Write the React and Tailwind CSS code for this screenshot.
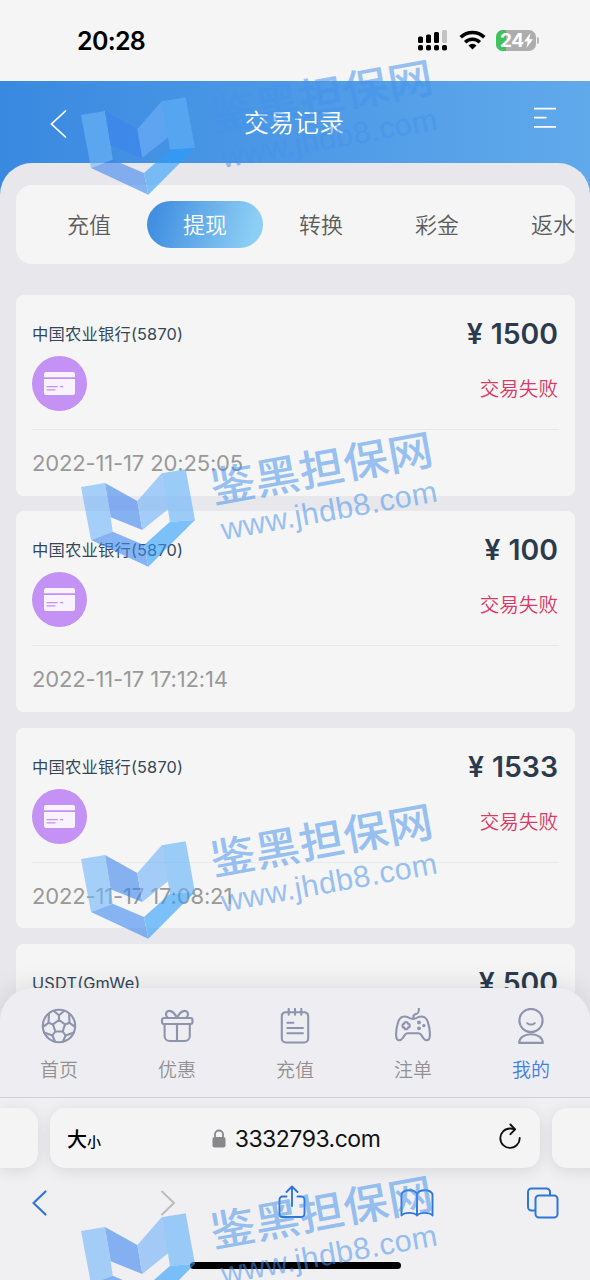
import React, { useState } from 'react';

const tabs = ['充值', '提现', '转换', '彩金', '返水'];

const records = [
  { id: 1, name: '中国农业银行(5870)', amount: '1500', status: '交易失败', time: '2022-11-17 20:25:05' },
  { id: 2, name: '中国农业银行(5870)', amount: '100', status: '交易失败', time: '2022-11-17 17:12:14' },
  { id: 3, name: '中国农业银行(5870)', amount: '1533', status: '交易失败', time: '2022-11-17 17:08:21' },
  { id: 4, name: 'USDT(GmWe)', amount: '500' },
];

function StatusBar() {
  return (
    <div className="flex h-[81px] shrink-0 items-start justify-between bg-[#f5f5f5] pl-[77px] pr-[51px] pt-[26px]">
      <span className="text-[25px] font-semibold leading-[30px] tracking-[-0.7px] text-black">20:28</span>
      <div className="flex h-[28px] items-center">
        <svg width="32" height="22" viewBox="0 0 32 22" className="mr-[9px]">
          <rect x="0" y="7.5" width="5" height="6.5" rx="1.5" />
          <rect x="8" y="5.5" width="5" height="8.5" rx="1.5" />
          <rect x="16" y="3" width="5" height="11" rx="1.5" />
          <rect x="24" y="1" width="5" height="13" rx="1.5" fill="#c4c4c6" />
          <rect x="0" y="16" width="5" height="5.5" rx="1.8" />
          <rect x="8" y="16" width="5" height="5.5" rx="1.8" />
          <rect x="16" y="16" width="5" height="5.5" rx="1.8" />
          <rect x="24" y="16" width="5" height="5.5" rx="1.8" />
        </svg>
        <svg width="27" height="20" viewBox="0 0 27 20" fill="none" stroke="#000" strokeWidth="3.6" className="mr-[10px]">
          <path d="M1.7 7.2a17 17 0 0 1 23.6 0" />
          <path d="M6.2 12.2a10.4 10.4 0 0 1 14.6 0" />
          <path d="M13.5 19.6l-4-4.2a5.6 5.6 0 0 1 8 0z" fill="#000" stroke="none" />
        </svg>
        <div className="flex items-center">
          <div className="relative flex h-[21px] w-[40px] items-center overflow-hidden rounded-[7px] bg-[#adadad]">
            <div className="absolute left-0 h-full w-[10px] bg-[#3fc35b]" />
            <span className="relative pl-[4px] text-[19px] font-bold leading-none tracking-[-0.5px] text-white">24</span>
            <svg width="9" height="15" viewBox="0 0 9 15" className="relative" fill="#fff">
              <path d="M6.5 0L0 8.5h3.7L2.4 15 9 6.2H5.2z" />
            </svg>
          </div>
          <div className="ml-[1px] h-[7px] w-[2px] rounded-r bg-[#b5b5b5]" />
        </div>
      </div>
    </div>
  );
}

function Header() {
  return (
    <div className="flex h-[116px] shrink-0 items-start justify-between bg-gradient-to-r from-[#3989e1] to-[#60a9eb] pl-[50px] pr-[34px]">
      <svg width="18" height="30" viewBox="0 0 18 30" className="mt-[28px]" fill="none" stroke="#fff" strokeWidth="1.7">
        <path d="M16 1.5L1.5 15 16 28.5" />
      </svg>
      <h1 className="mr-[14px] mt-[23px] text-[25px] font-[350] leading-[38px] text-white">交易记录</h1>
      <svg width="22" height="22" viewBox="0 0 22 22" className="mt-[26px]" stroke="#fff" strokeWidth="1.8">
        <path d="M0 1.7h22M0 10.7h12.5M0 19.9h22" />
      </svg>
    </div>
  );
}

function Tabs() {
  const [active, setActive] = useState('提现');

  return (
    <div className="flex h-[79px] shrink-0 items-center overflow-hidden rounded-2xl bg-[#f5f5f5] pl-[15px]">
      {tabs.map((tab) => (
        <button
          key={tab}
          onClick={() => setActive(tab)}
          className={
            tab === active
              ? 'h-[47px] w-[116px] shrink-0 rounded-full bg-[linear-gradient(105deg,#4390e1_10%,#8dcff4_90%)] pt-[2px] text-[22px] font-[350] text-white'
              : 'h-[47px] w-[116px] shrink-0 pt-[2px] text-[22px] font-[350] text-[#5c5c5c]'
          }
        >
          {tab}
        </button>
      ))}
    </div>
  );
}

function RecordCard({ record }) {
  return (
    <div className="h-[200.6px] shrink-0 rounded-lg bg-[#f5f5f5] px-4">
      <div className="flex h-[135px] justify-between border-b border-[#e9e9ec]">
        <div className="pt-[28px]">
          <p className="text-[16.3px] leading-[22px] tracking-[0.2px] text-[#34475a]">{record.name}</p>
          <div className="mt-[11px] flex h-[55px] w-[55px] items-center justify-center rounded-full bg-[#c491f5]">
            <svg width="31" height="23" viewBox="0 0 31 23">
              <path d="M2 0h27a2 2 0 0 1 2 2v3.3H0V2a2 2 0 0 1 2-2zM0 7h31v14a2 2 0 0 1-2 2H2a2 2 0 0 1-2-2z" fill="#f9f2ff" />
              <path d="M2.5 14.7h11.2M16 14.7h3.2M2.5 17.9h9" stroke="#c491f5" strokeWidth="1.3" />
            </svg>
          </div>
        </div>
        <div className="flex flex-col items-end pr-px pt-[21px]">
          <p className="flex text-[28.4px] font-semibold leading-[36px] text-[#2b3b4d]">
            <span className="mr-[8px]">¥</span>
            {record.amount}
          </p>
          <p className="mt-[23px] text-[19.6px] font-[350] leading-[28px] text-[#d93a66]">{record.status}</p>
        </div>
      </div>
      <p className="pt-[18px] text-[22px] leading-[30px] tracking-[-0.15px] text-[#999]">{record.time}</p>
    </div>
  );
}

function BallIcon() {
  return (
    <>
      <circle cx="18" cy="18" r="16.2" />
      <path d="M18 12l6 4.4-2.3 7.1h-7.4L12 16.4z" />
      <path d="M18 12V7.2M24 16.4l4.5-1.6M21.7 23.5l2.9 4M14.3 23.5l-2.9 4M12 16.4l-4.5-1.6" />
      <path d="M12.6 2.8L18 7.2l5.4-4.4M28.1 6l.4 8.8 5.5 4M33 24.5l-8.4 3-2.6 6M14 33.5l-2.6-6-8.4-3M2 18.8l5.5-4L7.9 6" />
    </>
  );
}

function GiftIcon() {
  return (
    <>
      <rect x="3" y="10" width="30.5" height="6" rx="2" />
      <path d="M5.6 16v12a5 5 0 0 0 5 5h15.2a5 5 0 0 0 5-5V16M18 16v17" />
      <path d="M18 9.8C15.5 5 12.5 2.4 9.5 3 6 4 6.5 8.4 9 9.8M18 9.8C20.5 5 23.5 2.4 26.5 3c3.5 1 3 5.4.5 6.8" />
    </>
  );
}

function NoteIcon() {
  return (
    <>
      <path d="M4.8 8a4 4 0 0 1 3-3.8h20.4a4 4 0 0 1 3 3.8v22.5a4 4 0 0 1-4 4H8.8a4 4 0 0 1-4-4z" />
      <path d="M11.7 1v5.8M18 1v5.8M24.3 1v5.8M10.4 14.7h6M10.4 20h15.5M10.4 25.2h15.5" />
    </>
  );
}

function GamepadIcon() {
  return (
    <>
      <path d="M12.5 9C8 7.4 4.7 9.3 3.3 13.5 1.8 18 .8 24 1.2 28.5c.4 4.5 4.3 4.8 6.6 1.5 1.8-2.6 2.3-4.8 4.6-4.8h11.2c2.3 0 2.8 2.2 4.6 4.8 2.3 3.3 6.2 3 6.6-1.5.4-4.5-.6-10.5-2.1-15C31.3 9.3 28 7.4 23.5 9c-3.5 2.4-7.5 2.4-11 0z" />
      <path d="M18.5 10.6V8.2c0-1.5 1-1.9 2.5-2.2 2.2-.4 2.9-1.4 2.9-5.2" />
      <path d="M9.3 15.8a1.8 1.8 0 0 1 3.6 0 1.8 1.8 0 0 1 0 3.7 1.8 1.8 0 0 1-3.6 0 1.8 1.8 0 0 1 0-3.7z" />
      <g fill="#8e94ad" stroke="none">
        <circle cx="24" cy="14.5" r="1.9" />
        <circle cx="28.8" cy="17.6" r="1.7" />
        <circle cx="24" cy="20.3" r="1.9" />
      </g>
    </>
  );
}

function UserIcon() {
  return (
    <>
      <circle cx="18" cy="12.5" r="11.6" />
      <path d="M14.3 15.2c2.1 1.7 5.3 1.7 7.4 0" />
      <path d="M6.2 34.9c0-5.2 5-8.6 11.8-8.6s11.8 3.4 11.8 8.6z" />
    </>
  );
}

const navItems = [
  { label: '首页', Icon: BallIcon },
  { label: '优惠', Icon: GiftIcon },
  { label: '充值', Icon: NoteIcon },
  { label: '注单', Icon: GamepadIcon },
  { label: '我的', Icon: UserIcon, active: true },
];

function BottomNav() {
  return (
    <nav className="relative -mt-[109px] grid h-[109px] shrink-0 grid-cols-5 rounded-t-[33px] bg-[#eeedf2] shadow-[0_-3px_24px_rgba(0,0,0,0.1)]">
      {navItems.map(({ label, Icon, active }) => (
        <div key={label} className="flex flex-col items-center pt-[20px]">
          <svg
            width="36"
            height="36"
            viewBox="0 0 36 36"
            fill="none"
            stroke="#8e94ad"
            strokeWidth="2.1"
            strokeLinecap="round"
            strokeLinejoin="round"
          >
            <Icon />
          </svg>
          <span
            className={
              active
                ? 'mt-[13px] text-[19px] font-[350] leading-[28px] text-[#3f7eea]'
                : 'mt-[13px] text-[19px] font-[350] leading-[28px] text-[#919191]'
            }
          >
            {label}
          </span>
        </div>
      ))}
    </nav>
  );
}

function BrowserBar() {
  return (
    <div className="relative h-[183px] shrink-0 overflow-hidden border-t border-[#cfcfd4] bg-[#f0f0f2]">
      <div className="mt-[10px] flex h-[60px] gap-[12px]">
        <div className="w-[38px] shrink-0 rounded-r-[15px] bg-[#f4f4f4] shadow-[0_3px_16px_rgba(0,0,0,0.1)]" />
        <div className="flex w-[490px] shrink-0 items-center justify-between rounded-[15px] bg-[#f4f4f4] pl-[17px] pr-[18px] pt-[2px] shadow-[0_3px_16px_rgba(0,0,0,0.1)]">
          <div className="flex w-[60px] items-baseline pt-px font-medium text-black">
            <span className="text-[20px]">大</span>
            <span className="text-[14px]">小</span>
          </div>
          <div className="flex items-center text-[23px] tracking-[-0.5px] text-[#111]">
            <svg width="14" height="19" viewBox="0 0 14 19" className="-mt-[2px] mr-[9px]">
              <path d="M3 9V5.5a4 4 0 0 1 8 0V9" fill="none" stroke="#88888c" strokeWidth="1.8" />
              <rect x="0.5" y="8" width="13" height="10.5" rx="2" fill="#88888c" />
            </svg>
            3332793.com
          </div>
          <div className="flex w-[57px] justify-end">
            <svg width="24" height="27" viewBox="0 0 24 27" className="-mt-[5px]" fill="none" stroke="#111" strokeWidth="1.9" strokeLinecap="round" strokeLinejoin="round">
              <path d="M21.7 15A9.7 9.7 0 1 1 12 5.500c1.800 0 3.400.2 4.700.9" />
              <path d="M12.4 1.5l4.700 4.900-4.700 4.800" />
            </svg>
          </div>
        </div>
        <div className="w-[60px] shrink-0 rounded-l-[15px] bg-[#f4f4f4] shadow-[0_3px_16px_rgba(0,0,0,0.1)]" />
      </div>

      <div className="mt-[17px] flex h-[36px] items-center pl-[31px]">
        <svg width="18" height="26" viewBox="0 0 18 26" fill="none" stroke="#2f76da" strokeWidth="2.2" strokeLinecap="round" strokeLinejoin="round">
          <path d="M14.5 1.5L2.5 13l12 11.5" />
        </svg>
        <svg width="18" height="26" viewBox="0 0 18 26" className="ml-[110px]" fill="none" stroke="#bcbcbe" strokeWidth="2" strokeLinecap="round" strokeLinejoin="round">
          <path d="M3 1.5L15 13 3 24.5" />
        </svg>
        <svg width="28" height="34" viewBox="0 0 28 34" className="-mt-[2px] ml-[101px]" fill="none" stroke="#2f76da" strokeWidth="1.9" strokeLinecap="round" strokeLinejoin="round">
          <path d="M8.5 11.5h-4a3 3 0 0 0-3 3V29a3 3 0 0 0 3 3h19a3 3 0 0 0 3-3V14.5a3 3 0 0 0-3-3h-4" />
          <path d="M14 21V1.8M8.5 7L14 1.5 19.5 7" />
        </svg>
        <svg width="34" height="28" viewBox="0 0 34 28" className="ml-[94px]" fill="none" stroke="#2f76da" strokeWidth="1.9" strokeLinecap="round" strokeLinejoin="round">
          <path d="M17 5C14.5 0 4 0 1.5 5v21.5c3-3.5 12.5-3.5 15.5 0 3-3.5 12.5-3.5 15.5 0V5C30 0 19.5 0 17 5zM17 5v21.5" />
        </svg>
        <svg width="33" height="32" viewBox="0 0 33 32" className="ml-[92px]" fill="none" stroke="#2f76da" strokeWidth="2">
          <path d="M9 23.5H5.5A3.5 3.5 0 0 1 2 20V5a3.5 3.5 0 0 1 3.5-3.5h15A3.5 3.5 0 0 1 24 5v3.5" />
          <rect x="9.5" y="8.5" width="22" height="22" rx="3.5" />
        </svg>
      </div>

      <div className="mx-auto mt-[41px] h-[7px] w-[211px] rounded-full bg-black" />
    </div>
  );
}

function Watermark() {
  return (
    <svg width="380" height="150" viewBox="70 430 380 150" className="block shrink-0">
      <g opacity="0.6">
        <path d="M81 487l24-4 5.7 34.3 2 14.4L91 540z" fill="#70b6fa" />
        <path d="M105 483l32.3 18 5 29-31.6-12.7z" fill="#3d84f0" />
        <path d="M137.3 501l24.4-27.7 7.6 35-27 21.7z" fill="#70b2fa" />
        <path d="M161.700 473.300l24-4L195 520l-25 1.700z" fill="#60b2fb" />
        <path d="M91 540l21.700-8.300L144 545l4.300 21.700z" fill="#3d88f0" />
        <path d="M144 545l26-23.300 25-1.700-46.700 46.700z" fill="#2c9dfd" />
      </g>
      <g fill="#4593ec" opacity="0.53">
        <text transform="translate(213.5 503.5) rotate(-10.2) scale(1 0.94)" fontSize="45" fontWeight="500" textLength="225">
          鉴黑担保网
        </text>
        <text transform="translate(223 540) rotate(-10.2)" fontSize="30.5" textLength="219" fontFamily="Liberation Sans, Arial, sans-serif">
          www.jhdb8.com
        </text>
      </g>
    </svg>
  );
}

function App() {
  return (
    <div className="relative flex h-[1280px] w-[590px] flex-col overflow-hidden bg-[#e8e7ec] font-[Inter,'Noto_Sans_CJK_SC',sans-serif]">
      <StatusBar />
      <Header />

      {/* Record list */}
      <main className="-mt-[34px] flex h-[934px] shrink-0 flex-col overflow-hidden rounded-t-[32px] bg-[#e8e7ec] pl-[16px] pr-[15px] pt-[22px]">
        <Tabs />
        <div className="mt-[31px] flex flex-col gap-[15.7px]">
          {records.map((record) => (
            <RecordCard key={record.id} record={record} />
          ))}
        </div>
      </main>

      <BottomNav />
      <BrowserBar />

      <div className="pointer-events-none absolute left-[70px] top-[58px] flex flex-col gap-[222px]">
        <Watermark />
        <Watermark />
        <Watermark />
        <Watermark />
      </div>
    </div>
  );
}

export default App;
